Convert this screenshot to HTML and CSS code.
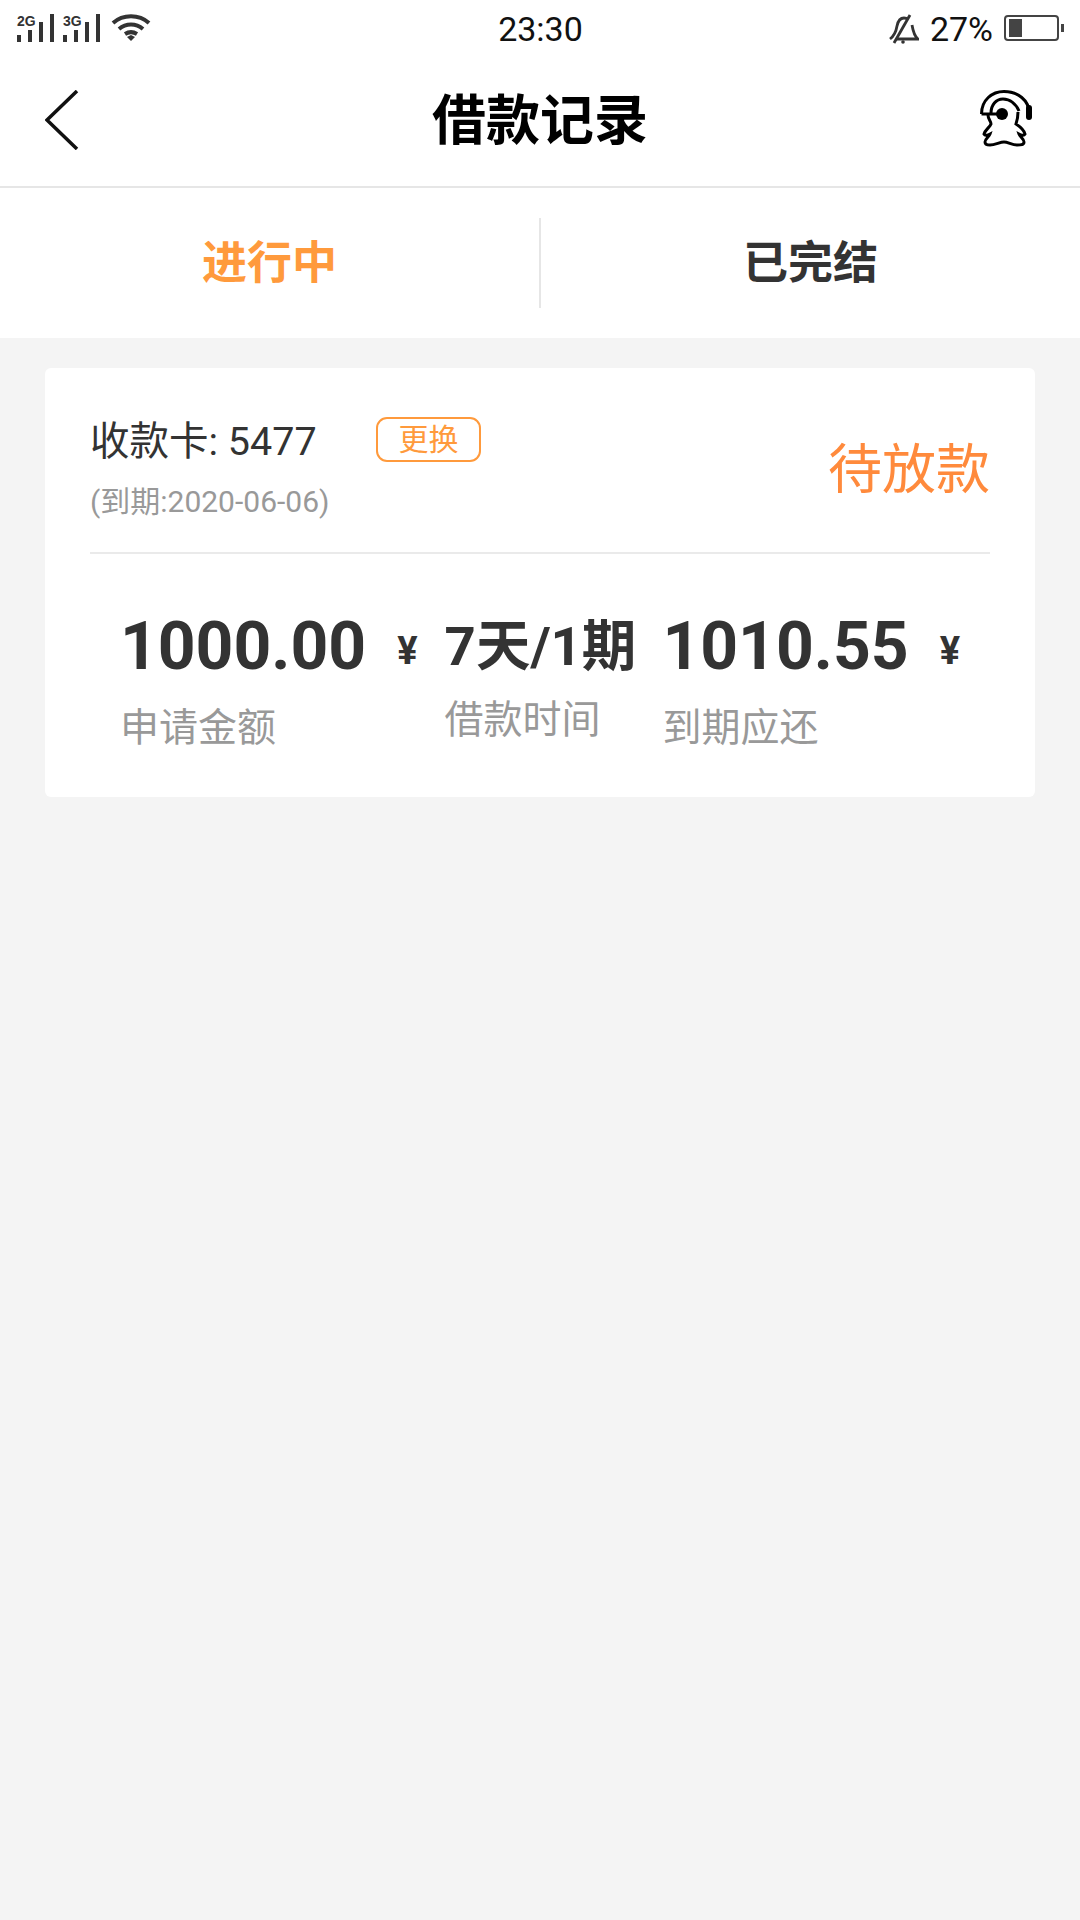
FILE: index.html
```html
<!DOCTYPE html>
<html lang="zh-CN">
<head>
<meta charset="utf-8">
<title>借款记录</title>
<link rel="stylesheet" href="styles.css">
</head>
<body>
<div class="page">
  <div class="statusbar">
    <div class="status-left">
      <div class="signal"><span class="net">2G</span>
        <svg class="bars" width="40" height="28" viewBox="0 0 40 28"><path d="M0 21h4v7H0zM11 16h4v12h-4zM22 8h4v20h-4zM33 0h4v28h-4z" fill="#333"/></svg></div>
      <div class="signal"><span class="net">3G</span>
        <svg class="bars" width="40" height="28" viewBox="0 0 40 28"><path d="M0 21h4v7H0zM11 16h4v12h-4zM22 8h4v20h-4zM33 0h4v28h-4z" fill="#333"/></svg></div>
      <svg class="wifi" width="40" height="28" viewBox="0 0 40 28" fill="none" stroke="#333" stroke-width="4"><path d="M2 9C12 0 28 0 38 9"/><path d="M8 15c7-6 17-6 24 0"/><path d="M14 20c4-2.500 8-2.500 12 0"/><path d="M16 23l4-2 4 2-4 4z" fill="#333" stroke="none"/></svg>
    </div>
    <div class="time">23:30</div>
    <div class="status-right">
      <svg class="bell" width="30" height="30" viewBox="0 0 30 30" fill="none" stroke="#333" stroke-width="2.800"><path d="M1 25c4-3 6-7 7-13 1-5 3-8 7-8 1.500 0 3 .5 4 1.500M23 11c1 6 2 11 6 14H7"/><path d="M5 29L21 1"/><circle cx="14" cy="28" r="1.800" fill="#333" stroke="none"/></svg>
      <span class="pct">27%</span>
      <div class="battery"><div class="battery-body"><div class="battery-fill"></div></div><div class="battery-nub"></div></div>
    </div>
  </div>

  <header class="header">
    <svg class="back" width="34" height="60" viewBox="0 0 34 60" fill="none" stroke="#111" stroke-width="3.500"><path d="M32 1L2 30l30 29"/></svg>
    <h1 class="title">借款记录</h1>
    <svg class="service" width="54" height="60" viewBox="0 0 54 60" fill="none" stroke="#000" stroke-width="3"><path d="M1.500 24C1.500 10 12 1.500 24 1.500c14 0 25 9 25 21"/><path d="M1.500 24H22"/><circle cx="22" cy="24" r="6" fill="#000" stroke="none"/><path d="M11 23c0-8 5-14 12-14 7 0 13 5 16 12"/><path d="M38 22C38 27 37 31 36 34C39 36 44 40 45 44C44 46 41 45 39 44C40 47 44 49 44 52C44 55 41 55 37 55C32 55 28 52 24 52C20 52 15 55 10 55C7 55 5 54 5 52C5 49 9 47 10 44C8 45 5 46 4 44C5 40 10 37 11 34C11 31 8 29 8 25"/><path d="M49 18v9" stroke-width="6" stroke-linecap="round"/></svg>
  </header>

  <nav class="tabs">
    <div class="tab tab-active">进行中</div>
    <div class="tab-sep"></div>
    <div class="tab">已完结</div>
  </nav>

  <main class="card">
    <section class="card-top">
      <div class="card-info">
        <div class="card-line">
          <span class="card-no">收款卡: 5477</span>
          <span class="change">更换</span>
        </div>
        <div class="expiry">(到期:2020-06-06)</div>
      </div>
      <div class="state">待放款</div>
    </section>
    <section class="stats">
      <div class="stat">
        <div class="stat-value"><span class="big">1000.00</span><span class="yen">¥</span></div>
        <div class="stat-label">申请金额</div>
      </div>
      <div class="stat stat-mid">
        <div class="stat-value"><span class="mid">7天/1期</span></div>
        <div class="stat-label">借款时间</div>
      </div>
      <div class="stat">
        <div class="stat-value"><span class="big">1010.55</span><span class="yen">¥</span></div>
        <div class="stat-label">到期应还</div>
      </div>
    </section>
  </main>
</div>
</body>
</html>
```
FILE: styles.css
```css
* { box-sizing: border-box; }
html, body { margin: 0; padding: 0; }
body {
  width: 1080px;
  height: 1920px;
  background: #f4f4f4;
  font-family: Roboto, "Noto Sans CJK SC", sans-serif;
  overflow: hidden;
}
.page { display: flex; flex-direction: column; height: 1920px; }

.statusbar {
  height: 56px;
  background: #fff;
  padding: 0 16px 0 17px;
  display: grid;
  grid-template-columns: 1fr auto 1fr;
  align-items: center;
}
.status-left { display: flex; align-items: flex-start; gap: 7px; height: 56px; padding-top: 13px; }
.signal { position: relative; width: 39px; height: 28px; }
.bars { display: block; }
.net {
  position: absolute;
  left: 0;
  top: 0;
  font: bold 14px/14px "Liberation Sans", sans-serif;
  color: #333;
}
.wifi { margin-left: 2px; }
.time { font-size: 34px; color: #111; text-align: center; line-height: 58px; }
.status-right { display: flex; align-items: center; justify-content: flex-end; gap: 11px; }
.pct { font-size: 34px; color: #111; line-height: 56px; }
.battery { display: flex; align-items: center; gap: 2px; margin-bottom: 3px; }
.battery-body {
  width: 55px;
  height: 26px;
  border: 2px solid #444;
  border-radius: 4px;
  padding: 2px 3px;
}
.battery-fill { width: 13px; height: 100%; background: #444; }
.battery-nub { width: 3px; height: 8px; background: #444; }

.header {
  height: 132px;
  background: #fff;
  border-bottom: 2px solid #e6e6e6;
  padding: 0 45px;
  display: grid;
  grid-template-columns: 1fr auto 1fr;
  align-items: center;
}
.back { margin-bottom: 3px; }
.service { justify-self: end; margin: 0 1px 2px 0; }
.title { margin: 2px 0 0; font-size: 54px; line-height: 70px; font-weight: 700; color: #000; }

.tabs {
  height: 150px;
  background: #fff;
  display: flex;
  align-items: center;
}
.tab { flex: 1; text-align: center; font-size: 45px; font-weight: 700; color: #333; line-height: 60px; margin-top: 2px; }
.tab-active { color: #ff9a3c; }
.tab-sep { width: 2px; height: 90px; background: #e6e6e6; }

.card {
  margin: 30px 45px 0;
  height: 429px;
  background: #fff;
  border-radius: 6px;
  padding: 0 45px;
}
.card-top {
  height: 186px;
  border-bottom: 2px solid #eaeaea;
  display: flex;
  justify-content: space-between;
  align-items: flex-start;
}
.card-info { padding-top: 46px; }
.card-line { display: flex; align-items: center; height: 52px; }
.card-no { font-size: 39.500px; color: #333; line-height: 54px; width: 286px; padding-top: 4px; }
.change {
  width: 105px;
  height: 45px;
  margin-top: -2px;
  border: 2px solid #ff9a3c;
  border-radius: 11px;
  color: #ff9a3c;
  font-size: 30px;
  line-height: 41px;
  text-align: center;
}
.expiry { margin-top: 16px; font-size: 30px; line-height: 40px; color: #999; }
.state { margin-top: 67px; font-size: 54px; line-height: 72px; color: #ff8a3c; }

.stats {
  display: flex;
  justify-content: center;
  gap: 27px;
  margin: 0 -45px;
  padding-top: 57px;
}
.stat { flex: none; }
.stat-value { display: flex; align-items: center; height: 70px; }
.big { font-size: 66px; font-weight: 700; line-height: 70px; color: #333; position: relative; top: 1px; }
.yen { margin-left: 31px; margin-top: 10px; font-size: 38px; font-weight: 700; color: #333; line-height: 38px; }
.mid { font-size: 54.500px; font-weight: 700; line-height: 70px; color: #333; }
.stat-label { margin-top: 22px; font-size: 39px; line-height: 50px; color: #999; }
.stat-mid { margin-right: -1px; }
.stat-mid .stat-label { margin-top: 14px; }
```
